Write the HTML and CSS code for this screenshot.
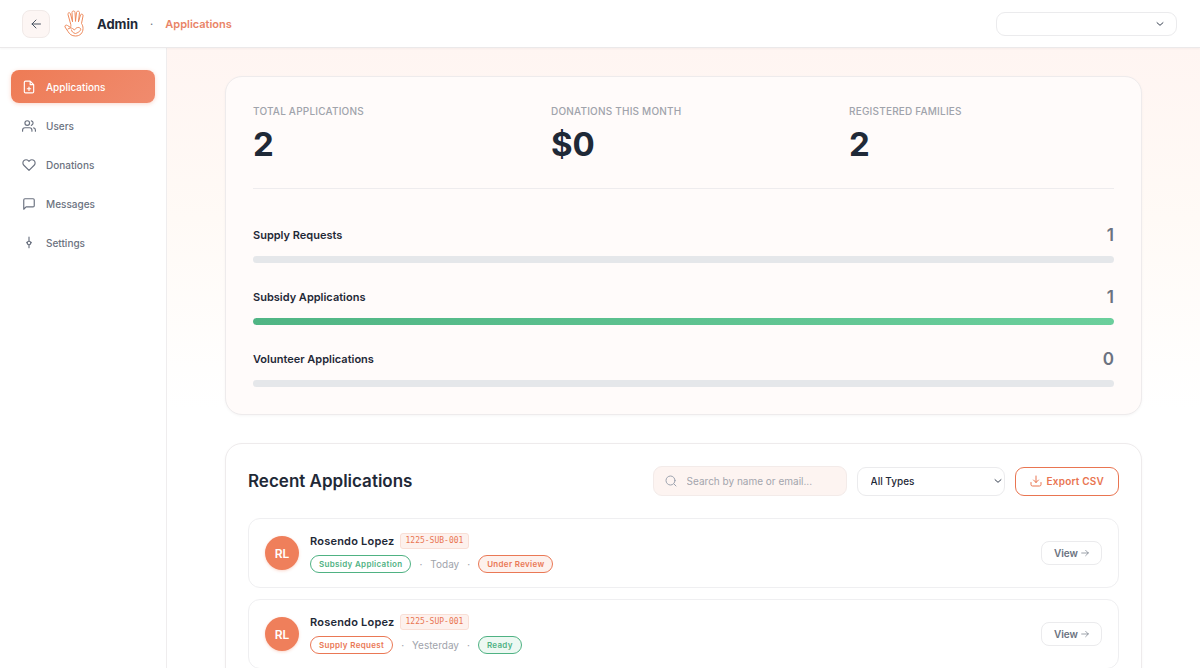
FILE: index.html
```html
<!DOCTYPE html>
<html lang="en">
<head>
<meta charset="UTF-8">
<meta name="viewport" content="width=device-width, initial-scale=1.0">
<title>Admin - Applications</title>
<link rel="stylesheet" href="styles.css">
</head>
<body>

<header class="topbar">
  <button type="button" class="back-btn" aria-label="Back">
    <svg class="icon" width="12" height="12" viewBox="0 0 24 24"><path d="M21 12H4M12 4l-8 8 8 8"/></svg>
  </button>
  <svg class="logo" width="22" height="28" viewBox="0 0 44 56">
    <path d="M13 27L8 9c-1-4 4-5 5-1l4 15M17 23L16 5c0-4 6-4 6 0l1 17M23 22l2-17c1-4 6-3 6 0l-2 18M29 23l4-13c1-3 6-2 5 2l-3 15c2 3 3 6 3 10 0 9-6 15-15 15-8 0-12-4-15-9L2 34c-1-3 2-5 5-3l6 4c1-3 1-5 0-8"/>
    <path d="M8 38c3-2 6-3 9-1l4 3c3-5 8-7 12-3 2 3-3 8-10 10-5-1-8-4-8-7"/>
  </svg>
  <span class="brand">Admin</span>
  <span class="crumb-dot">·</span>
  <span class="crumb">Applications</span>
  <div class="select-wrap account">
    <select class="select account-select" aria-label="Account"><option></option></select>
    <svg class="icon chevron" width="8" height="8" viewBox="0 0 24 24"><path d="M3 8l9 8 9-8"/></svg>
  </div>
</header>

<div class="layout">
  <nav class="sidebar">
    <a href="#" class="nav-link active">
      <svg class="icon" width="14" height="14" viewBox="0 0 24 24"><path d="M14 2H6a2 2 0 0 0-2 2v16a2 2 0 0 0 2 2h12a2 2 0 0 0 2-2V8zM14 2v6h6M12 12v6M9 15h6"/></svg>
      Applications
    </a>
    <a href="#" class="nav-link">
      <svg class="icon" width="14" height="14" viewBox="0 0 24 24"><path d="M17 21v-2a4 4 0 0 0-4-4H5a4 4 0 0 0-4 4v2M23 21v-2a4 4 0 0 0-3-3.870M16 3.130a4 4 0 0 1 0 7.750"/><circle cx="9" cy="7" r="4"/></svg>
      Users
    </a>
    <a href="#" class="nav-link">
      <svg class="icon" width="14" height="14" viewBox="0 0 24 24"><path d="M20.840 4.610a5.500 5.500 0 0 0-7.780 0L12 5.670l-1.060-1.060a5.500 5.500 0 0 0-7.780 7.780L12 21.230l8.840-8.840a5.500 5.500 0 0 0 0-7.780z"/></svg>
      Donations
    </a>
    <a href="#" class="nav-link">
      <svg class="icon" width="14" height="14" viewBox="0 0 24 24"><path d="M21 15a2 2 0 0 1-2 2H7l-4 4V5a2 2 0 0 1 2-2h14a2 2 0 0 1 2 2z"/></svg>
      Messages
    </a>
    <a href="#" class="nav-link">
      <svg class="icon" width="14" height="14" viewBox="0 0 24 24"><circle cx="12" cy="12" r="3"/><path d="M12 2v7M12 15v5M8 11l1 1M16 11l-1 1"/></svg>
      Settings
    </a>
  </nav>

  <main class="content">
    <section class="card overview">
      <div class="stats">
        <div>
          <div class="stat-label">Total Applications</div>
          <div class="stat-value">2</div>
        </div>
        <div>
          <div class="stat-label">Donations This Month</div>
          <div class="stat-value">$0</div>
        </div>
        <div>
          <div class="stat-label">Registered Families</div>
          <div class="stat-value">2</div>
        </div>
      </div>
      <div class="breakdown">
        <div>
          <div class="bar-head"><span class="bar-label">Supply Requests</span><span class="bar-count">1</span></div>
          <div class="bar"></div>
        </div>
        <div>
          <div class="bar-head"><span class="bar-label">Subsidy Applications</span><span class="bar-count">1</span></div>
          <div class="bar"><div class="bar-fill" style="width: 100%"></div></div>
        </div>
        <div>
          <div class="bar-head"><span class="bar-label">Volunteer Applications</span><span class="bar-count">0</span></div>
          <div class="bar"></div>
        </div>
      </div>
    </section>

    <section class="card recent">
      <div class="recent-head">
        <h2>Recent Applications</h2>
        <label class="search">
          <svg class="icon" width="12" height="12" viewBox="0 0 24 24"><circle cx="11" cy="11" r="9"/><path d="M18 18l4 4"/></svg>
          <input type="text" placeholder="Search by name or email..." aria-label="Search by name or email">
        </label>
        <div class="select-wrap types">
          <select class="select types-select" aria-label="Application type"><option>All Types</option></select>
          <svg class="icon chevron" width="8" height="8" viewBox="0 0 24 24"><path d="M3 8l9 8 9-8"/></svg>
        </div>
        <button type="button" class="export-btn">
          <svg class="icon" width="12" height="12" viewBox="0 0 24 24"><path d="M2 15v4a3 3 0 0 0 3 3h14a3 3 0 0 0 3-3v-4M7 10l5 5 5-5M12 15V2"/></svg>
          Export CSV
        </button>
      </div>

      <div class="app-list">
        <article class="app-row">
          <div class="avatar">RL</div>
          <div class="app-info">
            <div class="app-line"><span class="app-name">Rosendo Lopez</span><span class="app-code">1225-SUB-001</span></div>
            <div class="app-meta">
              <span class="tag tag-green">Subsidy Application</span>
              <span class="dot">·</span><span>Today</span><span class="dot">·</span>
              <span class="tag tag-review">Under Review</span>
            </div>
          </div>
          <button type="button" class="view-btn">View
            <svg class="icon" width="8" height="8" viewBox="0 0 24 24"><path d="M2 12h20M14 4l8 8-8 8"/></svg>
          </button>
        </article>
        <article class="app-row">
          <div class="avatar">RL</div>
          <div class="app-info">
            <div class="app-line"><span class="app-name">Rosendo Lopez</span><span class="app-code">1225-SUP-001</span></div>
            <div class="app-meta">
              <span class="tag tag-orange">Supply Request</span>
              <span class="dot">·</span><span>Yesterday</span><span class="dot">·</span>
              <span class="tag tag-ready">Ready</span>
            </div>
          </div>
          <button type="button" class="view-btn">View
            <svg class="icon" width="8" height="8" viewBox="0 0 24 24"><path d="M2 12h20M14 4l8 8-8 8"/></svg>
          </button>
        </article>
      </div>
    </section>
  </main>
</div>

</body>
</html>
```
FILE: styles.css
```css
* {
  box-sizing: border-box;
}

body {
  font-family: Inter, "Liberation Sans", sans-serif;
  font-size: 11px;
  color: #1f2937;
  background-color: #fff;
  margin: 0;
  height: 100vh;
  display: flex;
  flex-direction: column;
  overflow: hidden;
}

button,
input,
select {
  font-family: inherit;
  margin: 0;
}

button {
  cursor: pointer;
}

.icon {
  fill: none;
  stroke: currentColor;
  stroke-width: 2;
  stroke-linecap: round;
  stroke-linejoin: round;
  flex-shrink: 0;
}

/* Header */
.topbar {
  display: flex;
  align-items: center;
  flex-shrink: 0;
  height: 48px;
  padding: 0 23px 0 22px;
  border-bottom: 1px solid #ebe9ea;
  box-shadow: 0 1px 2px rgba(0, 0, 0, 0.04);
  position: relative;
}

.back-btn {
  display: flex;
  align-items: center;
  justify-content: center;
  width: 28px;
  height: 28px;
  padding: 0;
  color: #4b5563;
  background-color: #fdf6f4;
  border: 1px solid #f1eae8;
  border-radius: 8px;
}

.logo {
  margin: 0 11px 0 14px;
  fill: none;
  stroke: #ee8a5c;
  stroke-width: 2;
  stroke-linecap: round;
  stroke-linejoin: round;
}

.brand {
  font-size: 13px;
  font-weight: 700;
}

.crumb-dot {
  margin: 0 12px;
  color: #6b7280;
}

.crumb {
  font-weight: 600;
  color: #e98467;
}

.select-wrap {
  position: relative;
}

.select {
  appearance: none;
  width: 100%;
  color: #1f2937;
  background-color: #fff;
  border: 1px solid #ebebed;
}

.chevron {
  position: absolute;
  top: 50%;
  transform: translateY(-50%);
  stroke-width: 3;
  color: #374151;
  pointer-events: none;
}

.account {
  width: 181px;
  height: 24px;
  margin-left: auto;
}

.account-select {
  height: 24px;
  border-radius: 9px;
}

.account .chevron {
  right: 13px;
}

/* Sidebar */
.layout {
  display: flex;
  flex: 1;
  min-height: 0;
}

.sidebar {
  display: flex;
  flex-direction: column;
  gap: 6px;
  width: 167px;
  flex-shrink: 0;
  padding: 22px 11px;
  border-right: 1px solid #efedee;
}

.nav-link {
  display: flex;
  align-items: center;
  gap: 10px;
  height: 33px;
  padding: 0 11px;
  color: #6b7280;
  font-size: 10px;
  font-weight: 500;
  text-decoration: none;
  border-radius: 8px;
}

.nav-link.active {
  color: #fff;
  background: linear-gradient(135deg, #ee7b55, #f08b6e);
  box-shadow: 0 1px 4px rgba(238, 123, 85, 0.3);
}

/* Main */
.content {
  flex: 1;
  overflow: hidden;
  padding: 28px 32px;
  background: linear-gradient(180deg, #fff5f2 0, #fffaf6 170px, #fff 360px);
}

.card {
  max-width: 917px;
  margin: 0 auto 28px;
  border: 1px solid #eeebec;
  border-radius: 17px;
  box-shadow: 0 1px 3px rgba(0, 0, 0, 0.04);
}

.overview {
  padding: 27px;
  background-color: #fffbfa;
}

.stats {
  display: grid;
  grid-template-columns: repeat(3, 1fr);
  gap: 33px;
  padding-bottom: 24px;
  border-bottom: 1px solid #eeecee;
}

.stat-label {
  font-size: 10px;
  line-height: 15px;
  font-weight: 500;
  letter-spacing: 0.02em;
  text-transform: uppercase;
  color: #a0a3ab;
}

.stat-value {
  margin-top: 5px;
  font-size: 33px;
  line-height: 40px;
  font-weight: 700;
}

.breakdown {
  display: grid;
  gap: 22px;
  padding-top: 34px;
}

.bar-head {
  display: flex;
  align-items: center;
  justify-content: space-between;
  line-height: 25px;
  margin-bottom: 8px;
}

.bar-label {
  font-weight: 600;
}

.bar-count {
  font-size: 17px;
  font-weight: 600;
  color: #6b7280;
}

.bar {
  height: 7px;
  background-color: #e5e7ea;
  border-radius: 4px;
  overflow: hidden;
}

.bar-fill {
  height: 100%;
  background: linear-gradient(90deg, #50b584, #6bcf9c);
  border-radius: 4px;
}

/* Recent applications */
.recent {
  padding: 22px;
  background-color: #fff;
}

.recent-head {
  display: flex;
  align-items: center;
  gap: 10px;
  margin-bottom: 22px;
}

.recent-head h2 {
  flex: 1;
  margin: 0;
  font-size: 17px;
  font-weight: 600;
}

.search {
  display: flex;
  align-items: center;
  gap: 10px;
  width: 194px;
  height: 30px;
  padding: 0 11px;
  color: #9ca3af;
  background-color: #fdf4f1;
  border: 1px solid #f3ebe9;
  border-radius: 9px;
}

.search input {
  flex: 1;
  min-width: 0;
  padding: 0;
  font-size: 10px;
  background: none;
  border: none;
  outline: none;
}

.search input::placeholder {
  color: #a3a5ad;
}

.types {
  width: 148px;
}

.types-select {
  display: block;
  height: 29px;
  padding: 0 13px;
  font-size: 10px;
  font-weight: 500;
  border-radius: 9px;
}

.types .chevron {
  right: 3px;
}

.export-btn {
  display: flex;
  align-items: center;
  gap: 5px;
  height: 29px;
  padding: 0 14px;
  font-size: 10px;
  font-weight: 600;
  letter-spacing: 0.02em;
  color: #e97551;
  background-color: #fff;
  border: 1px solid #e97551;
  border-radius: 9px;
}

.app-list {
  display: grid;
  gap: 11px;
}

.app-row {
  display: flex;
  align-items: center;
  gap: 11px;
  height: 70px;
  padding: 0 16px;
  border: 1px solid #efeff1;
  border-radius: 12px;
}

.avatar {
  display: flex;
  align-items: center;
  justify-content: center;
  width: 34px;
  height: 34px;
  font-size: 12px;
  font-weight: 600;
  color: #fff;
  background-color: #ef7f5b;
  border-radius: 50%;
  box-shadow: 0 1px 3px rgba(238, 123, 85, 0.3);
}

.app-info {
  flex: 1;
}

.app-line,
.app-meta {
  display: flex;
  align-items: center;
}

.app-line {
  gap: 5px;
  margin-bottom: 6px;
}

.app-name {
  font-size: 11px;
  font-weight: 600;
  letter-spacing: 0.02em;
}

.app-code {
  padding: 0 5px;
  font-family: "DejaVu Sans Mono", monospace;
  font-size: 8px;
  line-height: 14px;
  color: #e97551;
  background-color: #fdf1ed;
  border: 1px solid #f9dfd6;
  border-radius: 3px;
}

.app-meta {
  gap: 8px;
  font-size: 10px;
  color: #a0a3ab;
}

.tag {
  padding: 0 8px;
  font-size: 8px;
  line-height: 16px;
  font-weight: 600;
  letter-spacing: 0.04em;
  border: 1px solid currentColor;
  border-radius: 9px;
}

.tag-green {
  color: #4fb283;
}

.tag-orange {
  color: #ea7855;
}

.tag-review {
  color: #ea7855;
  background-color: #fdf1ed;
}

.tag-ready {
  color: #4fb283;
  background-color: #edf8f2;
}

.view-btn {
  display: flex;
  align-items: center;
  gap: 3px;
  height: 24px;
  padding: 0 12px;
  font-size: 10px;
  font-weight: 600;
  color: #6b7280;
  background-color: #fff;
  border: 1px solid #ebebed;
  border-radius: 8px;
}
```
